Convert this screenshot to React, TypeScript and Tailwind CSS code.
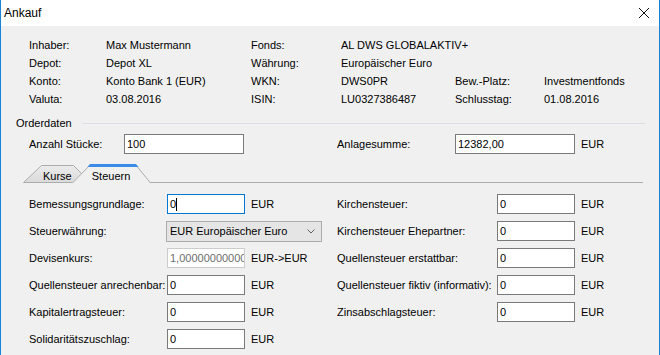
import React from "react";

const font = "font-['Liberation_Sans',Arial,sans-serif]";

function TextBox({ value, focused, width = "w-[78px]" }: { value: string; focused?: boolean; width?: string }) {
    return (
        <div
            className={`${width} h-[20px] bg-white border flex items-center px-[2px] ${
                focused ? "border-[#0078d7]" : "border-[#7a7a7a]"
            }`}
        >
            <span>{value}</span>
            {focused && <span className="w-px h-[13px] bg-black" />}
        </div>
    );
}

const info: string[][] = [
    ["Inhaber:", "Max Mustermann", "Fonds:", "AL DWS GLOBALAKTIV+"],
    ["Depot:", "Depot XL", "Währung:", "Europäischer Euro"],
    ["Konto:", "Konto Bank 1 (EUR)", "WKN:", "DWS0PR", "Bew.-Platz:", "Investmentfonds"],
    ["Valuta:", "03.08.2016", "ISIN:", "LU0327386487", "Schlusstag:", "01.08.2016"],
];

const rightTaxes = [
    "Kirchensteuer:",
    "Kirchensteuer Ehepartner:",
    "Quellensteuer erstattbar:",
    "Quellensteuer fiktiv (informativ):",
    "Zinsabschlagsteuer:",
];

function Tabs() {
    return (
        <div className="flex h-[19px] mt-[10px] ml-[22px] mr-[16px]">
            <div className="relative w-[127px] h-[19px]">
                <svg className="absolute inset-0" width="127" height="19" viewBox="0 0 127 19">
                    <defs>
                        <linearGradient id="kurse" x1="0" y1="0" x2="0" y2="1">
                            <stop offset="0" stopColor="#ececec" />
                            <stop offset="1" stopColor="#dadada" />
                        </linearGradient>
                    </defs>
                    <polygon points="0.5,18.5 18.5,1.5 50.5,1.5 67.5,18.5" fill="url(#kurse)" stroke="#acacac" />
                    <polygon points="49,19 67.5,0.5 112.5,0.5 127,19" fill="#f0f0f0" />
                    <polyline points="49.5,19 67.5,0.5 112.5,0.5 127.5,19" fill="none" stroke="#acacac" />
                    <polygon points="67,0 113,0 115.5,3 64.5,3" fill="#3c8be6" />
                </svg>
                <div className="relative flex pt-[5px] leading-[14px]">
                    <span className="ml-[20px]">Kurse</span>
                    <span className="ml-[20px]">Steuern</span>
                </div>
            </div>
            <div className="flex-1 border-b border-[#acacac]" />
        </div>
    );
}

export default function App() {
    return (
        <div className={`${font} text-[11px] text-black w-[660px] h-[355px] bg-[#f0f0f0] border-x border-[#1883d7] overflow-hidden`}>
            <div className="h-[26px] bg-white flex items-center justify-between">
                <span className="pl-[3px] text-[12px]">Ankauf</span>
                <svg className="mr-[10px]" width="10" height="10" viewBox="0 0 10 10">
                    <path d="M0 0L10 10M10 0L0 10" stroke="#111" strokeWidth="1" />
                </svg>
            </div>

            <div className="grid grid-cols-[77px_145px_90px_114px_89px_1fr] auto-rows-[18px] items-center pl-[28px] pt-[10px]">
                {info.map((row, i) =>
                    row.map((cell, j) => (
                        <span key={`${i}-${j}`} className={row.length === 4 && j === 3 ? "col-span-3" : ""}>
                            {cell}
                        </span>
                    ))
                )}
            </div>

            <div className="flex items-center h-[14px] mt-[8px] ml-[15px] mr-[14px]">
                <span>Orderdaten</span>
                <div className="flex-1 h-px bg-[#dce0e6] ml-[10px]" />
            </div>

            <div className="flex items-center h-[20px] mt-[4px] pl-[28px]">
                <span className="w-[95px]">Anzahl Stücke:</span>
                <TextBox value="100" width="w-[120px]" />
                <span className="w-[118px] ml-[93px]">Anlagesumme:</span>
                <TextBox value="12382,00" width="w-[120px]" />
                <span className="ml-[6px]">EUR</span>
            </div>

            <Tabs />

            <div className="grid grid-cols-[138px_78px_92px_160px_78px_auto] auto-rows-[20px] gap-y-[7px] items-center pl-[28px] pt-[11px]">
                <span>Bemessungsgrundlage:</span>
                <TextBox value="0" focused />
                <span className="pl-[6px]">EUR</span>
                <span>{rightTaxes[0]}</span>
                <TextBox value="0" />
                <span className="pl-[6px]">EUR</span>

                <span>Steuerwährung:</span>
                <div className="col-span-2 w-[156px] h-[21px] -ml-px bg-[#e5e5e5] border border-[#acacac] flex items-center justify-between pl-[3px] pr-[6px]">
                    <span>EUR Europäischer Euro</span>
                    <svg width="8" height="5" viewBox="0 0 8 5">
                        <path d="M0.5 0.5L4 4L7.5 0.5" fill="none" stroke="#606060" />
                    </svg>
                </div>
                <span>{rightTaxes[1]}</span>
                <TextBox value="0" />
                <span className="pl-[6px]">EUR</span>

                <span>Devisenkurs:</span>
                <div className="w-[78px] h-[20px] bg-white border border-[#cccccc] text-[#6d6d6d] flex items-center px-[2px] overflow-hidden whitespace-nowrap">
                    1,000000000000
                </div>
                <span className="pl-[6px]">EUR-&gt;EUR</span>
                <span>{rightTaxes[2]}</span>
                <TextBox value="0" />
                <span className="pl-[6px]">EUR</span>

                <span className="whitespace-nowrap">Quellensteuer anrechenbar:</span>
                <TextBox value="0" />
                <span className="pl-[6px]">EUR</span>
                <span className="whitespace-nowrap">{rightTaxes[3]}</span>
                <TextBox value="0" />
                <span className="pl-[6px]">EUR</span>

                <span>Kapitalertragsteuer:</span>
                <TextBox value="0" />
                <span className="pl-[6px]">EUR</span>
                <span>{rightTaxes[4]}</span>
                <TextBox value="0" />
                <span className="pl-[6px]">EUR</span>

                <span>Solidaritätszuschlag:</span>
                <TextBox value="0" />
                <span className="pl-[6px]">EUR</span>
            </div>
        </div>
    );
}
